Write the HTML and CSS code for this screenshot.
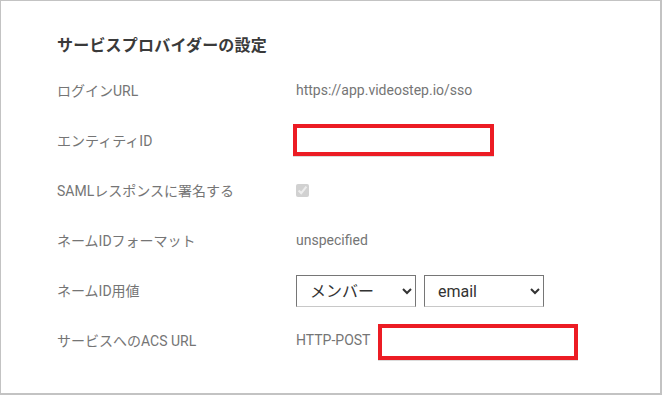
FILE: index.html
```html
<!DOCTYPE html>
<html lang="ja">
<head>
  <meta charset="UTF-8" />
  <meta name="viewport" content="width=device-width, initial-scale=1.0" />
  <title>サービスプロバイダーの設定</title>
  <link rel="stylesheet" href="styles.css">
</head>
<body>

  <div class="panel">
    <h2>サービスプロバイダーの設定</h2>

    <div class="row">
      <div class="label">ログインURL</div>
      <div class="value">https://app.videostep.io/sso</div>
    </div>

    <div class="row">
      <div class="label">エンティティID</div>
      <div class="value"><input type="text" class="marked entity" /></div>
    </div>

    <div class="row">
      <div class="label">SAMLレスポンスに署名する</div>
      <div class="value"><input type="checkbox" class="check" checked disabled /></div>
    </div>

    <div class="row">
      <div class="label">ネームIDフォーマット</div>
      <div class="value">unspecified</div>
    </div>

    <div class="row">
      <div class="label">ネームID用値</div>
      <div class="value selects">
        <select>
          <option>メンバー</option>
        </select>
        <select>
          <option>email</option>
        </select>
      </div>
    </div>

    <div class="row">
      <div class="label">サービスへのACS URL</div>
      <div class="value">
        <span>HTTP-POST</span>
        <input type="text" class="marked acs" />
      </div>
    </div>
  </div>

</body>
</html>
```

FILE: styles.css
```css
body {
  margin: 0;
  font-family: Roboto, "Noto Sans CJK JP", sans-serif;
  background-color: white;
}

.panel {
  width: 662px;
  height: 395px;
  box-sizing: border-box;
  border: 1px solid #c3c3c3;
  border-right-width: 2px;
  border-bottom-width: 2px;
  padding: 33px 0 0 56px;
}

h2 {
  margin: 0 0 7px;
  font-size: 16px;
  line-height: 24px;
  font-weight: bold;
  color: #3a3a3a;
  letter-spacing: 0.2px;
}

.row {
  display: flex;
  align-items: center;
  height: 50px;
}

.label {
  width: 239px;
  flex-shrink: 0;
  font-size: 14px;
  color: #757575;
}

.value {
  display: flex;
  align-items: center;
  gap: 8px;
  font-size: 14px;
  color: #757575;
}

.marked {
  box-sizing: border-box;
  border: 4px solid #ec1c24;
  background: white;
  margin: 0;
  padding: 0;
  box-shadow: 0 1px 0 #dcdcdc;
  outline: none;
}

.entity {
  width: 201px;
  height: 32px;
  margin-left: -3px;
}

.acs {
  width: 200px;
  height: 36px;
  margin-top: 4px;
}

.check {
  width: 13px;
  height: 13px;
  margin: 0;
}

.selects select {
  width: 120px;
  height: 32px;
  font-family: Roboto, "Noto Sans CJK JP", sans-serif;
  font-size: 16px;
  color: #333;
  background: white;
  border: 1px solid #767676;
  border-bottom-color: #c8c8c8;
  border-radius: 0;
  padding: 0 0 0 9px;
  margin: 2px 0 0;
}
```
